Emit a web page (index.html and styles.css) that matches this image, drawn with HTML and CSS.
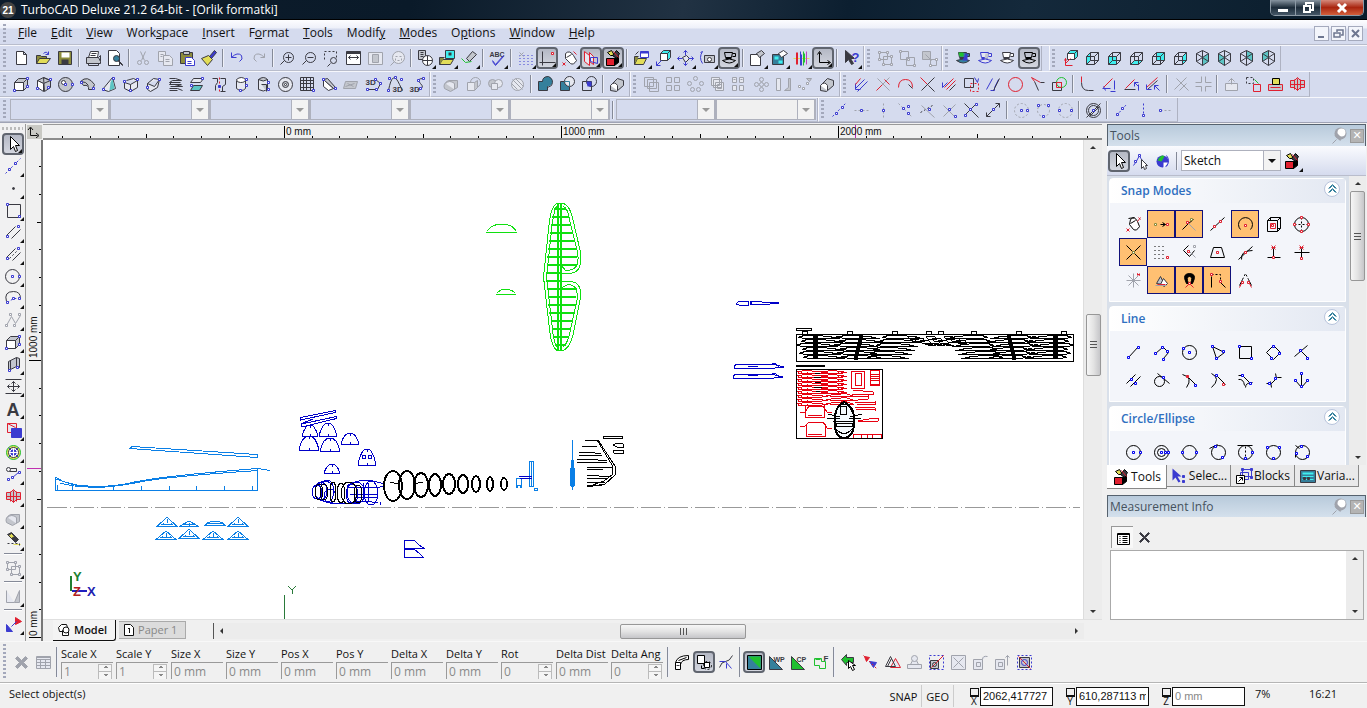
FILE: index.html
```html
<!DOCTYPE html>
<html lang="en">
<head>
<meta charset="utf-8">
<title>TurboCAD Deluxe 21.2 64-bit - [Orlik formatki]</title>
<link rel="stylesheet" href="styles.css">
</head>
<body>
<header class="titlebar">
  <svg class="logo" width="16" height="16" viewBox="0 0 16 16"><circle cx="8" cy="8" r="8" fill="#444"/><text x="8" y="12" text-anchor="middle" class="logo-text">21</text></svg>
  <h1>TurboCAD Deluxe 21.2 64-bit - [Orlik formatki]</h1>
  <div class="winbtns">
    <button aria-label="Minimize"><svg width="14" height="12"><path d="M2 7h10v3h-10z" fill="#fff"/></svg></button>
    <button aria-label="Restore"><svg width="14" height="12"><path d="M5 3v-2h7v7h-2M3 4h6v6h-6z" fill="none" stroke="#fff" stroke-width="2"/></svg></button>
    <button class="close" aria-label="Close"><svg width="14" height="12"><path d="M3 2l8 8M11 2l-8 8" stroke="#fff" stroke-width="3"/></svg></button>
  </div>
</header>
<nav class="menubar">
  <span class="grip"></span>
  <button><u>F</u>ile</button><button><u>E</u>dit</button><button><u>V</u>iew</button><button>Work<u>s</u>pace</button><button><u>I</u>nsert</button><button>F<u>o</u>rmat</button><button><u>T</u>ools</button><button>Modif<u>y</u></button><button><u>M</u>odes</button><button>O<u>p</u>tions</button><button><u>W</u>indow</button><button><u>H</u>elp</button>
  <div class="mdi">
    <button aria-label="Minimize drawing"><svg width="13" height="13"><path d="M3 9h6v2h-6z" fill="#6d7690"/></svg></button>
    <button aria-label="Restore drawing"><svg width="13" height="13"><path d="M5 5v-2h6v5h-2M2 6h6v4h-6z" fill="none" stroke="#6d7690" stroke-width="1.5"/></svg></button>
    <button aria-label="Close drawing"><svg width="13" height="13"><path d="M3 3l7 7M10 3l-7 7" stroke="#6d7690" stroke-width="2"/></svg></button>
  </div>
</nav>
<div class="toolrow">
  <div class="band" data-tools="new open save | print preview | cut copy paste brush | undo redo | zoomin zoomout zoomwin extents page zoomprev | format, image, clean, | spell, | grid, ortho*, snapmouse, plane*, palette*, | folder, view3d, pan, camera, cup*, | sheet, blocks, colors, axes*, | help,"></div>
  <div class="band" data-tools="group ungroup explode"></div>
  <div class="band wide-end" data-tools="cupcolor cupblue cupwhite cup*"></div>
  <div class="band" data-tools="viewaxes left front bottom back right iso1 iso2 iso3 iso4"></div>
</div>
<div class="toolrow">
  <div class="band" data-tools="box boxrot sphere torus cone prism revolve coil extrude glass cyl cyl2 ring mesh facet faded poly3d spline3d curve3d"></div>
  <div class="band" data-tools="solid soliddim soliddim2 slice | union subtract intersect | roundbox"></div>
  <div class="band" data-tools="stack array4 radial stack2 array5 flower mirror scalefit roundbox"></div>
  <div class="band" data-tools="trim break arcedit meet offset copyedit parallel circlered angle overlap | fillet dimedit chamfer stretch | trimg cornerg | push movebox stamp seal"></div>
</div>
<div class="toolrow props">
  <div class="band combos">
    <label class="combo"><select disabled aria-label="Layer"></select></label>
    <label class="combo"><select disabled aria-label="Color"></select></label>
    <label class="combo"><select disabled aria-label="Pen style"></select></label>
    <label class="combo"><select disabled aria-label="Pen width"></select></label>
    <label class="combo"><select disabled aria-label="Pen pattern"></select></label>
    <label class="combo flat"><select disabled aria-label="Scale"></select></label>
    <span class="sep"></span>
    <label class="combo"><select disabled aria-label="Brush style"></select></label>
    <label class="combo flat"><select disabled aria-label="Brush pattern"></select></label>
  </div>
  <div class="band" data-tools="c1 c2 c3 c4 c5 c6 c7 c8 | c9 c10 c11 | c12 | c13 c14 c15"></div>
</div>
<main class="work">
  <aside class="leftbar">
    <span class="hgrip"></span>
    <div class="vtools" data-tools="cursor*, line, point, rect, dline, mline, circle, arc, bezier, box, slab, dimension, letter, fillcolor, target, link, seal, solid, spray, | group, | mirrorv, | transform,"></div>
  </aside>
  <section class="document">
    <div class="origin"><svg width="13" height="13"><path d="M3.500 3v7.500h7M1 5l2.500-3 2.500 3M9 8l3 2.500-3 2.500" fill="none" stroke="#111"/></svg></div>
    <svg class="hruler"><g transform="translate(-43 -125)"><g id="hticks" class="k"></g><path d="M855.500 125v14" stroke="#c030b0"/><text x="286" y="135">0 mm</text><text x="563" y="135">1000 mm</text><text x="840" y="135">2000 mm</text></g></svg>
    <svg class="vruler"><g transform="translate(-27 -140)"><g id="vticks" class="k"></g><path d="M27 468.500h15" stroke="#c030b0" stroke-width="1"/><text transform="translate(37 358) rotate(-90)">1000 mm</text><text transform="translate(37 636) rotate(-90)">0 mm</text></g></svg>
    <svg class="canvas" role="img" aria-label="Orlik formatki drawing">
      <g transform="translate(-43 -140)">
        <path class="axis" d="M47 507.500H1080"/>
        <g class="sky">
          <path d="M132 446.500L257 454.500V457.500L130 448.500z"/>
          <path d="M55.500 477.500V490.500H257.500V469M57.500 485v5M72.500 485v5M113.500 487v3M141.500 486v4M169.500 486v4M196.500 486v4M224.500 486v4M252.500 486v4"/>
          <path d="M55 477Q70 487 95 487.500Q118 487 145 481Q175 476 258 470.500M56 479Q70 484 80 485.500Q108 488 130 483Q160 476 258 468.500L270 470.500M60 483Q80 489 110 486"/>
          <g id="triangles"></g>
          <path d="M516 478h5v9h-1v-2h-3v2h-1zM529.500 461.500h4v25h-4zM531 461v26M534 488h3v2h-3zM571.500 460h2v26h-2zM572.500 440v50M570.500 468h4v17h-4z"/>
        </g>
        <g class="blue">
          <path d="M300.500 417.500L335.500 410.500V412.500L300.500 420zM301.500 424L336.500 416.500V418.500L302 427zM303 423l10-4M519 476.500h13M520 478h12"/>
          <g id="domes"></g>
          <path d="M404.500 540.500h10l4 4 5 3.500h-19zM404.500 549.500h10l5 4 4 4h-19z"/>
          <path d="M347 485.500q15-8 28-4l8 2v3l-6 1M348 487h30M350 494h28M354 497h24M363 483v16M368 483v18M380 502v3M318 484q6-6 14 0M320 500q14 6 30 3t28 0"/>
          <path d="M736 304l3-3h9v4h-9zM750.500 301v4M751 301l11 1h9l8 1-9 1H751zM734 367l2-3h29l11 1 8 2-9 1H734zM748 366h10M770 365l5-2 4 4M733 377l2-3h29l11 1 8 2-9 1H733zM748 375h10M770 375l5-2 4 4"/>
          <g id="noseblue"></g>
        </g>
        <g class="lime" id="wing"><path d="M486 232.500h31M487 231q5-7 15-7t14 7M496 294.500h20M497 293q4-4 9-4t9 4"/></g>
        <g class="k">
          <g id="hoops"></g>
          <path d="M585 440h13l17 26v9l-10 9-18 3M597 440l15 25v10l-8 6-17 6M582 446.500h15M579 453l10-1 12 2M579 455h23M577 460l12-1 18 2M577 462h30M587 467l10 1 15-1M587 470l16-1M587 475l24 2M587 478l20 1M587 482l18 1M587 485l15 0M603.500 436.500h19v2h-19zM613 445q3-2 10-1v3h-6zM613 450h10v3h-9z"/>
          <path d="M796.500 328.500h15v2h-15zM796.500 365.500h28v1h-28z"/><path d="M796.500 334.500h277v27h-277z"/>
          <g id="panel"></g>
        </g>
        <g class="red" id="sheet"><path d="M851.500 371.500h13v17h-13zM855.500 373.500h6v12h-6zM870 370.500h9v15h-9zM870 374h9M870 376h9M870 378h9M870 380h9M870 384h9M800 412h5l4-6h14l4 6h5M805 405v12h19v-12M808 415h14M800 426h5l4-4h14l4 6h5M806 424v12h19v-12M808 434h14M853 390l20 2v2l-21 0M850 397l18-1v3l-20 2M855 403l20-1v2h-18M855 407l20 1v2l-19-1M858 421l16-3h4v3l-20 1M853 434h28v4h-28zM861 434v4M867 434v4M872 434v4"/></g>
        <g class="k"><path class="paper" d="M844 402q-8 4-9 14v9q0 12 9 13 9-1 10-13v-9q-1-10-10-14z"/><path d="M796.500 369.500h86v69h-86zM836 412q1-7 8-8 6 1 8 8M840.500 406.500h6v8h-6zM828 414l12 3M850 417l12-3M827 418h13M849 418h12M833 421h22M836.500 423.500h16v3h-16zM836 429q8 9 16 0"/><path d="M815 373h5M814 377h7M815 382h6M814 387h8M816 391h4"/></g>
        <path d="M71 576v15" stroke="#208030" stroke-width="2"/><path d="M72 591h15" stroke="#2020c0" stroke-width="2"/>
        <g class="ucs"><text x="73" y="581" fill="#208030">Y</text><text x="73" y="596" fill="#b02020">Z</text><text x="87" y="596" fill="#2020b0">X</text></g>
        <path d="M284.500 595v24M288 586l4 4 4-4M292.500 590v4" stroke="#2a7a3a" fill="none"/>
      </g>
    </svg>
    <div class="vscroll"><button aria-label="Scroll up" class="up"></button><span class="track t1"></span><span class="thumb"></span><span class="track t2"></span><button aria-label="Scroll down" class="down"></button></div>
    <div class="sheetbar">
      <div class="tabs">
        <button class="tab on"><svg width="14" height="14"><g fill="#fff" stroke="#111"><path d="M1.500 4.500l3-3h5l1 3-3 4h-5z"/><path d="M5.500 7.500h6v5h-6z"/><circle cx="9" cy="7" r="3"/></g></svg>Model</button>
        <button class="tab"><svg width="12" height="14"><path d="M1.500 1.500h6l3 3v8h-9zM6.500 5v5M5 6l1-1" fill="#fff" stroke="#111"/></svg>Paper 1</button>
      </div>
      <div class="hscroll"><button aria-label="Scroll left" class="lt"></button><span class="track h1"></span><span class="thumb"></span><span class="track h2"></span><button aria-label="Scroll right" class="rt"></button></div>
    </div>
  </section>
  <aside class="dock">
    <div class="panelhead"><h2>Tools</h2><span data-icon="pin"></span><button class="x" aria-label="Close Tools">✕</button></div>
    <div class="docktools">
      <div class="tools" data-tools="cursor* nodeedit globe |"></div>
      <label class="combo live"><select aria-label="Tool palette"><option>Sketch</option></select></label>
      <div class="tools" data-tools="palette,"></div>
    </div>
    <div class="dockbody">
      <div class="sections">
        <section><h3>Snap Modes<button aria-label="Collapse Snap Modes" data-icon="chev"></button></h3><div class="cells" data-tools="d-none d-near* d-vertex* d-mid d-arc* d-box d-quad d-int* d-grid d-perp d-face d-tan d-proj d-ext d-star d-mag* d-magnet* d-ortho* d-opp"></div></section>
        <section><h3>Line<button aria-label="Collapse Line" data-icon="chev"></button></h3><div class="cells" data-tools="l1 l2 l3 l4 l5 l6 l7 l8 l9 l10 l11 l12 l13 l14"></div></section>
        <section><h3>Circle/Ellipse<button aria-label="Collapse Circle/Ellipse" data-icon="chev"></button></h3><div class="cells" data-tools="e1 e2 e3 e4 e5 e6 e7"></div></section>
      </div>
      <div class="vscroll"><button aria-label="Palette up" class="up"></button><span class="thumb long"></span><span class="track t2"></span><button aria-label="Palette down" class="down"></button></div>
    </div>
    <div class="docktabs">
      <button class="on"><i data-icon="palette"></i>Tools</button><button><i data-icon="selinfo"></i>Selec...</button><button><i data-icon="blocksinfo"></i>Blocks</button><button><i data-icon="calc"></i>Varia...</button>
    </div>
    <div class="panelhead second"><h2>Measurement Info</h2><span data-icon="pin"></span><button class="x" aria-label="Close Measurement Info">✕</button></div>
    <div class="meastools"><div class="tools" data-tools="list* xmark"></div></div>
    <div class="measure"><textarea aria-label="Measurement results" readonly></textarea><div class="vscroll"><button aria-label="Results up" class="up"></button><span class="track t2"></span><button aria-label="Results down" class="down"></button></div></div>
  </aside>
</main>
<div class="inspector">
  <div class="band" data-tools="xmarkg tableg |"></div>
  <div class="fields">
    <label>Scale X<span class="spin"><input value="1" disabled></span></label>
    <label>Scale Y<span class="spin"><input value="1" disabled></span></label>
    <label>Size X<span><input value="0 mm" disabled></span></label>
    <label>Size Y<span><input value="0 mm" disabled></span></label>
    <label>Pos X<span><input value="0 mm" disabled></span></label>
    <label>Pos Y<span><input value="0 mm" disabled></span></label>
    <label>Delta X<span><input value="0 mm" disabled></span></label>
    <label>Delta Y<span><input value="0 mm" disabled></span></label>
    <label>Rot<span class="spin"><input value="0" disabled></span></label>
    <label>Delta Dist<span><input value="0 mm" disabled></span></label>
    <label>Delta Ang<span class="spin"><input value="0" disabled></span></label>
  </div>
  <div class="tools" data-tools="| s1 s2* s3 | s4* s5 s6 s7 | s8 s9 s10 s11 s12 s13 s14 s15 s16"></div>
</div>
<footer class="status">
  <p>Select object(s)</p>
  <span class="mode">SNAP</span><span class="mode geo">GEO</span>
  <label class="coord"><i>X</i><input value="2062,417727 mm"></label>
  <label class="coord"><i>Y</i><input value="610,287113 mm"></label>
  <label class="coord"><i>Z</i><input value="0 mm" disabled></label>
  <span class="zoom">7%</span><span class="clock">16:21</span>
</footer>
<script src="app.js"></script>
</body>
</html>
```
FILE: styles.css
```css
* { box-sizing: border-box; }
body { margin: 0; height: 100vh; display: flex; flex-direction: column; overflow: hidden; background: #f0f0f0; color: #111; font: 12px/16px "Open Sans", "Noto Sans", sans-serif; }
button { padding: 0; border: 0; background: none; font: inherit; color: inherit; }
input, select, textarea { font: inherit; border-radius: 0; }
h1, h2, h3, p { margin: 0; font: inherit; }
svg { display: block; flex: none; }
i { font-style: normal; }

.titlebar { flex: none; height: 20px; display: flex; align-items: center; gap: 5px; padding-right: 3px; color: #fff; background: linear-gradient(100deg, #0d1c2c, #0a1a29 30%, #213243 50%, #0c1f30 62%, #14293b 75%, #0a1c2b); border-bottom: 1px solid #000; }
.titlebar h1 { flex: 1; font-size: 12px; white-space: nowrap; }
.logo-text { font: bold 10px "Liberation Sans", sans-serif; fill: #fff; }
.winbtns { align-self: flex-start; display: flex; height: 16px; border: 1px solid #8c99a5; border-top: 0; border-radius: 0 0 5px 5px; overflow: hidden; }
.winbtns button { width: 25px; display: grid; place-items: center; background: linear-gradient(#8794a0, #1d2c3a 50%, #455767); border-right: 1px solid #8c99a5; }
.winbtns .close { width: 42px; border: 0; background: linear-gradient(#d58a7c, #a9250f 50%, #d3603c); }

.menubar { flex: none; height: 25px; display: flex; align-items: center; padding: 2px 3px 0; background: linear-gradient(#fdfdff 0, #eef0f9 8px, #d5dbee 9px); border-bottom: 1px solid #b9bdcc; }
.menubar > button { padding: 0 7px; }
.menubar .grip { margin-right: 5px; }
.mdi { margin-left: auto; display: flex; gap: 2px; padding-right: 1px; }
.mdi button { width: 15px; height: 15px; border: 1px solid #a5aabd; background: #f3f5fb; }

.toolrow { flex: none; height: 26px; display: flex; background: #d5dbee; border-top: 1px solid #f6f7fc; overflow: hidden; }
.band { display: flex; align-items: center; padding: 0 1px 0 3px; border-right: 1px solid #aeb2c2; border-bottom: 1px solid #b9bdcc; flex: none; }
.band + .band { border-left: 1px solid #f6f7fc; padding-left: 2px; }
.wide-end { margin-right: 7px; }
.grip { flex: none; width: 3px; height: 19px; margin-right: 4px; background: repeating-linear-gradient(#a3a8bb 0 2px, transparent 2px 4px); }
.tool { position: relative; flex: none; width: 22px; height: 22px; display: grid; place-items: center; }
.tool svg { overflow: visible; }
.tool.on { border: 2px solid #60656f; border-radius: 4px; background: linear-gradient(#b4b8c4, #d3d6df); }
.tool.on svg { margin: -2px; }
.tool.more::after { content: ""; position: absolute; right: 0; bottom: 0; border: 2px solid #111; border-top-color: transparent; border-left-color: transparent; }
.sep { flex: none; width: 2px; height: 18px; margin: 0 2px; background: #858a98; border-right: 1px solid #eef0f8; }
.tools { display: flex; align-items: center; }

.combo { position: relative; display: block; width: 100px; height: 21px; border: 1px solid #aeb1bd; border-right-width: 2px; flex: none; }
.combo select { display: block; width: 100%; height: 100%; border: 0; padding: 0 2px; appearance: none; background: transparent; color: #111; opacity: 1; }
.combo::before { content: ""; position: absolute; right: 0; top: 0; bottom: 0; width: 16px; background: #f3f3f3; border-left: 1px solid #aeb1bd; pointer-events: none; }
.combo::after { content: ""; position: absolute; right: 4px; top: 8px; border: 4px solid transparent; border-top-color: #999; pointer-events: none; }
.combo.flat { background: #f0f0f0; }
.props { height: 26px; border-bottom: 1px solid #9fa3b5; }

.work { flex: 1; min-height: 0; display: flex; border-top: 1px solid #f0f0f0; }
.leftbar { flex: none; width: 26px; border-right: 1px solid #999; background: #f1f1f2; padding-top: 3px; }
.hgrip { display: block; height: 3px; margin: 0 2px 3px; background: repeating-linear-gradient(90deg, #bbb 0 2px, transparent 2px 4px); }
.vtools { display: flex; flex-direction: column; align-items: center; padding-left: 1px; }
.vtools .sep { width: 18px; height: 2px; margin: 2px 0; border: 0; border-bottom: 1px solid #fff; }
.document { flex: 1; min-width: 0; display: grid; grid-template: 16px minmax(0, 1fr) 22px / 16px minmax(0, 1fr) 18px; margin-left: 1px; background: #f0f0f0; }
.origin { background: #c9c9c4; margin: 1px 1px 1px 0; }
.hruler { width: 100%; height: 16px; grid-column: 2 / 4; border-bottom: 2px solid #8c8c8c; border-top: 1px solid #999; }
.vruler { width: 16px; height: 100%; grid-row: 2 / 4; border-right: 2px solid #777; }
.hruler text, .vruler text { font: 10px "Liberation Sans", sans-serif; fill: #111; }
.canvas { width: 100%; height: 100%; background: #fff; shape-rendering: crispEdges; border-right: 1px solid #ddd; }
.canvas g { fill: none; }
.k { stroke: #000; }
.sky { stroke: #0a7fe6; }
.blue { stroke: #0000c8; }
.lime { stroke: #10e010; }
.red { stroke: #e80010; }
.bold { stroke-width: 2; }
.paper { fill: #f4fbff; stroke-width: 2; }
.solidfill { fill: #000; }
.axis { stroke: #999; stroke-dasharray: 20 3 1 3; }
.canvas .ucs { font: bold 13px "Liberation Sans", sans-serif; }

.vscroll { display: flex; flex-direction: column; align-items: center; background: #ececec; padding: 0 1px; }
.vscroll button, .hscroll button { width: 15px; height: 15px; flex: none; display: grid; place-items: center; }
.vscroll button::after, .hscroll button::after { content: ""; border: 3px solid transparent; }
.up::after { border-bottom-color: #333 !important; margin-top: -3px; }
.down::after { border-top-color: #333 !important; margin-bottom: -3px; }
.lt::after { border-right-color: #333 !important; margin-left: -3px; }
.rt::after { border-left-color: #333 !important; margin-right: -3px; }
.track { flex: 1; }
.t1 { flex: 159; } .t2 { flex: 229; }
.h1 { flex: 392; } .h2 { flex: 323; }
.thumb { flex: none; width: 15px; height: 62px; border: 1px solid #979797; border-radius: 2px; background: linear-gradient(90deg, #f6f6f6, #e3e3e3 50%, #c6c6c9); display: grid; place-items: center; }
.thumb::after { content: ""; width: 7px; height: 7px; background: repeating-linear-gradient(#555 0 1px, transparent 1px 3px); }
.long { height: 90px; }
.hscroll { flex: 1; display: flex; align-items: center; border-left: 1px solid #555; background: #ececec; margin: 3px 0 2px; }
.hscroll .thumb { width: 126px; height: 15px; background: linear-gradient(#f6f6f6, #e3e3e3 50%, #c6c6c9); }
.hscroll .thumb::after { background: repeating-linear-gradient(90deg, #555 0 1px, transparent 1px 3px); }
.sheetbar { grid-column: 2 / 4; display: flex; padding-right: 18px; border-top: 1px solid #e0e0e0; }
.tabs { display: flex; align-items: flex-start; width: 170px; padding-left: 10px; gap: 3px; }
.tab { display: flex; align-items: center; gap: 3px; height: 18px; padding: 0 8px 0 4px; font-size: 11px; background: #dcdcdc; color: #888; border: solid #aaa; border-width: 1px 1px 1px 0; margin-top: 1px; }
.tab.on { height: 21px; margin-top: 0; color: #111; font-weight: 600; background: #f4f4f4; border: solid #111; border-width: 0 1px 1px 0; border-radius: 0 0 3px 0; }

.dock { flex: none; width: 260px; display: flex; flex-direction: column; margin-left: 5px; background: #f0f0f0; padding-right: 1px; }
.panelhead { flex: none; height: 22px; display: flex; align-items: center; padding: 0 1px 0 2px; gap: 2px; color: #45525e; background: linear-gradient(#b8cadb, #d4e0ec); border: 1px solid #56626e; border-bottom: 0; }
.panelhead h2 { flex: 1; font-size: 12px; }
.panelhead .x { width: 14px; height: 14px; background: #b4b4b4; border: 1px solid #999; color: #fff; font: bold 11px/12px "DejaVu Sans", sans-serif; }
.docktools { flex: none; height: 30px; display: flex; align-items: center; padding-left: 1px; background: linear-gradient(#fafbfe, #d5dbee); border-bottom: 1px solid #b9bdcc; }
.docktools .sep { margin: 0 3px 0 2px; }
.combo.live { background: #fff; width: 100px; border-width: 1px; }
.combo.live::after { border-top-color: #111; }
.dockbody { flex: 1; min-height: 0; display: flex; background: #d9e0ea; overflow: hidden; }
.sections { flex: 1; overflow: hidden; display: flex; flex-direction: column; gap: 4px; padding: 2px 3px 0 2px; }
.sections section { flex: none; background: #f3f5fa; border: 1px solid #fff; border-radius: 4px 4px 0 0; padding-bottom: 7px; }
.sections h3 { height: 24px; display: flex; align-items: center; justify-content: space-between; padding: 0 5px 0 11px; font-weight: 600; color: #2f6fc0; background: linear-gradient(90deg, #fff, #e3e8f2); }
.sections h3 button { width: 16px; height: 16px; margin-top: -4px; border: 1px solid #b8c4dc; border-radius: 8px; background: #fff; }
.sections h3 svg { margin: -2px; }
.cells { display: grid; grid-template-columns: repeat(7, 28px); padding: 7px 0 0 9px; }
.cells .tool { width: 28px; height: 28px; }
.cells .tool.on { border: 1px solid #10107a; border-radius: 0; background: #ffc072; }
.docktabs { flex: none; display: flex; height: 27px; align-items: flex-start; margin-bottom: 3px; }
.docktabs button { display: flex; align-items: center; justify-content: center; gap: 1px; height: 22px; width: 64px; border: solid #888; border-width: 0 1px 1px 0; background: #e9e9ea; font-size: 12px; }
.docktabs .on { background: #fff; height: 24px; width: 60px; }
.meastools { flex: none; height: 33px; padding: 9px 0 0 4px; }
.meastools .tool.on { border: solid #999; border-width: 1px 0 0 1px; border-radius: 0; background: #f8f8f8; }
.measure { flex: none; height: 70px; display: flex; margin: 0 2px 21px 3px; border: 1px solid #aaa; background: #fff; }
.measure textarea { flex: 1; min-width: 0; border: 0; resize: none; padding: 2px; }

.inspector { flex: none; height: 42px; display: flex; align-items: center; border-top: 1px solid #f8f8f8; border-bottom: 1px solid #b5b5b5; }
.inspector .band { border: 0; padding-right: 0; }
.inspector .band .grip { height: 36px; }
.inspector .sep { height: 30px; }
.fields { display: flex; gap: 3px; padding-left: 1px; width: 605px; overflow: hidden; }
.fields label { width: 52px; flex: none; font-size: 11px; white-space: nowrap; line-height: 17px; }
.fields span { display: block; height: 17px; border: solid #9a9a9a; border-width: 1px 0 0 1px; }
.fields input { display: block; width: 100%; height: 16px; padding: 0 2px; border: 0; background: #f0f0f0; color: #8a8a8a; font-size: 12px; }
.spin { position: relative; }
.spin::before { content: ""; position: absolute; right: 1px; top: 1px; width: 12px; height: 15px; border: 1px solid #bbb; background: linear-gradient(#f5f5f5 6px, #bbb 6px 7px, #f5f5f5 7px); }
.spin::after { content: ""; position: absolute; right: 4px; top: 3px; width: 6px; height: 10px; background: linear-gradient(#888, #888) 50% 0 / 2px 1px no-repeat, linear-gradient(#888, #888) 50% 1px / 4px 1px no-repeat, linear-gradient(#888, #888) 50% 8px / 4px 1px no-repeat, linear-gradient(#888, #888) 50% 9px / 2px 1px no-repeat; }

.status { flex: none; height: 25px; display: flex; align-items: center; padding: 0 8px 0 9px; border-top: 1px solid #fff; font-size: 11px; }
.status p { flex: 1; padding-bottom: 4px; }
.mode { padding: 4px 4px 0; border-right: 1px solid #ccc; height: 22px; }
.geo { margin-right: 16px; }
.coord { display: flex; align-items: center; gap: 2px; margin-right: 13px; }
.coord i { width: 8px; font-size: 10px; line-height: 9px; padding-top: 1px; text-align: center; }
.coord i::before { content: ""; display: block; width: 7px; height: 6px; border: 1px solid #111; border-bottom-width: 2px; }
.coord input { width: 73px; height: 19px; padding: 0 2px; border: 1px solid #111; background: #fff; font-size: 11px; color: #111; font-family: "Liberation Sans", sans-serif; }
.coord input:disabled { color: #888; }
.zoom { width: 54px; margin-left: -3px; padding-bottom: 4px; }
.clock { width: 50px; padding-bottom: 4px; }
```
FILE: app.js
```javascript
// Colours used by the icon notation: first letter is the stroke, second the fill.
const INK = { k: '#3a3a42', K: '#000', b: '#3b3bd0', B: '#0000f0', r: '#e02030', g: '#a0a3ac', G: '#c3c6cd', w: '#fff', W: '#e6e8f0', y: '#e2dd58', o: '#8c8c3c', t: '#35809c', u: '#5cc4c4', c: '#40eeee', n: '#20c030', N: '#0a7a5a', m: '#c040c0', '.': 'none' };
const WIRE = 'k. M3 7h8v8h-8zM3 7l4-4h8l-4 4M15 3v8l-4 4M7 3v8h8M3 15l4-4';
const ISO = 'k. M9 1l6 3v8l-6 4-6-4v-8zM3 4l6 4 6-4M9 8v8M3 12l6-4 6 4M9 1v7';
const CUP = '{k}{w} M4 3h8l-1 5h-6zM12 4h3v3h-3M2 11q7 5 13 0q-6-3-13 0M5 9h6';
const cup = (s, f) => CUP.replace('{k}', s).replace('{w}', f);
const BOX = 'kG M2 7l4-4h9l-4 4zM11 15l4-4v-8l-4 4z;kw M2 7h9v8h-9z;bw S 2 15 15 3 15 11';

// Each icon is a list of parts: "<stroke><fill>[-] path | O cx cy r | S x y ... | T x y size text".
const ICONS = {
  new: 'kw M4 2h7l3 3v10h-10zM11 2v3h3', open: 'ko M2 14v-8h4l1 1h5v3;ky M2 14l3-5h11l-4 5z;b. M9 4q3-3 5 1M14 2v3h-3',
  save: 'ko M2 2h13v13h-13z;.w M5 3h8v5h-8z;.k M5 10h7v5h-7z', print: 'kw M4 8l2-6h8l-1 6z;kG M2 8h12l2 4v2h-14z;k. M7 4h5M6 6h5M4 14v2h10v-2M14 8l2-2v6',
  preview: 'kw M2 1h8l3 3v12h-11z;kt O 10 9 3;kk M12 11l4 4v1l-4-4', cut: 'g. M6 2l4 9M11 2l-4 9;g. O 5 13 2;g. O 12 13 2',
  copy: 'gW M2 2h7v10h-7z;gW M7 6h6l3 3v7h-9zM9 10h4M9 12h4M4 5h3M4 7h2', paste: 'ko M2 3h12v11h-12z;kG M5 2h6v3h-6z;bw M7 8h6l3 3v5h-9zM9 12h4M9 14h4',
  brush: 'ky M1 9l7-3l4 4l-5 6z;kb M9 7l5-6l2 2l-5 6z', undo: 'b. M3 3v5h5M3 8q6-6 10-2q2 4-2 6', redo: 'g. M14 4v4h-4M14 8q-6-6-10-2q-2 4 2 6',
  zoomin: 'k. O 10 8 5;k. M10 5v6M7 8h6M6 11l-4 4', zoomout: 'k. O 10 8 5;k. M7 8h6M6 11l-4 4', zoomwin: 'k.- M2 10v-8h12v7;k. O 11 11 3;k. M8 14l-3 3',
  extents: 'kw M2 3h14v12h-14zM4 8h10M6 6l-2 2 2 2M12 6l2 2-2 2;kk M2 2h14v2h-14z', page: 'gW M2 3h14v12h-14z;gG M6 5h6v8h-6z', zoomprev: 'gW O 10 8 6;g. M6 12l-4 4;g.- M7 7h6v4h-6z',
  format: 'kG M2 1h7v9h-7zM4 3h3M4 5h3M4 7h3;kw O 11 11 5;k. M6 11h10M11 6v10', image: 'ky M1 15l3-5h11l-3 5z;kc M7 1h9v8h-9z;ko M1 15v-7h5;.k M10 3h3v3h-3z', clean: 'kG M6 9l6-7 4 3-7 7z;n. M1 9l4 4 6-1',
  spell: 'kk T 1 7 7 ABC;b. M4 11l3 4 8-9;b. M4 12l3 4 8-9', grid: 'b.d M3 6h13M3 9h13M3 12h13M3 15h13;g. M3 3l4 4M7 3l-4 4', ortho: 'k. M4 2v14M1 13h16;rw S 14 4',
  snapmouse: 'kw M5 4q4-4 8 2l3 5q-3 5-6 3l-5-5zM6 8l5-3;r. M2 13l3 3M5 13l-3 3M13 2l3 3', plane: 'rW M2 2l5 4v10l-5-4z;rW M7 3l4 4v8l-4-3z;b. M8 8h7v6l-7-2z',
  palette: 'Kr M2 9h8v7h-8z;KK M10 9l4-2v6l-4 3z;Ky M3 3l4-2 3 5h-4z;Kk M8 6l4-5 3 3-3 5z;r. M9 2l5 6', folder: 'ky M2 15l3-6h9l-3 6z;ko M2 15v-8h4;bw M8 2h8v6h-8z;.b M8 2h8v2h-8z;k. M3 5l3-3',
  view3d: 'kc M6 4l3-3h7l-3 3zM13 11l3-3v-7l-3 3z;kw M6 4h7v7h-7z;b. M2 16l5-5M2 12v4h4', pan: 'kW M6 8l4-2 3 3-4 4z;b. M9 1v5M9 12v4M1 9h5M12 9h5M7 3l2-2 2 2M7 14l2 2 2-2M3 7l-2 2 2 2M15 7l2 2-2 2',
  camera: 'kG M6 6h10v7h-10z;kw O 11 10 2;b. M4 2q-4 6 0 12M4 2l-2 1', cup: cup('K', '.'), cupcolor: cup('k', 't') + ';.n M4 3h5v4h-4z;.b M11 4h2v7h-5z', cupblue: cup('b', 'W') + ';.G M9 4h3l-1 5h-3z', cupwhite: cup('k', 'w'),
  sheet: 'kw M2 5h10v11h-10z;kG M8 4l5-3 3 3-5 4z', blocks: 'kt M2 5h11v10h-11z;.c M4 7h4v3h-4zM8 11h4v3h-4z;kw M8 4l5-3 4 3-6 4z', colors: 'y. M1 9h16;r. M4 3v12M5 3v12;b. M8 2v14M9 5v11;n. M11 2v14M12 4v9;m. M14 2v13',
  axes: 'K. M5 3v10h10M3 5l2-3 2 3M13 11l3 2-3 2', help: 'kk M3 1v12l3-3 3 5 2-1-3-5h4z;bb T 9 12 13 ?', group: 'g. M3 3h8v7h-8zM7 7h8v8h-8z;gW S 3 3 11 3 3 10 15 7 7 15 15 15', ungroup: 'g. M2 2h8v8h-8zM8 8h8v8h-8z;gW S 2 2 10 10 16 16', explode: 'gG M2 2h8v8h-8z;g. M5 5l6 6M10 10h6v6h-6z;gw S 16 10 10 16',
  viewaxes: 'kc M6 4l3-3h7l-3 3zM13 10l3-3v-6l-3 3z;kw M6 4h7v6h-7z;r. M4 9v7h7M4 14l5-5M3 11l1-2 1 2', left: '.c M3 7l4-4v8l-4 4z;' + WIRE, front: '.c M3 7h8v8h-8z;' + WIRE, bottom: '.c M3 15l4-4h8l-4 4z;' + WIRE, back: '.c M7 3h8v8h-8z;' + WIRE, right: '.c M11 7l4-4v8l-4 4z;' + WIRE,
  iso1: '.u M9 8l6-4v8l-6 4z;' + ISO, iso2: '.u M3 4l6 4v8l-6-4z;' + ISO, iso3: '.u M9 1l6 3v8l-6-4z;' + ISO, iso4: '.u M3 4l6-3v7l-6 4z;' + ISO,
  box: BOX, boxrot: 'kG M9 2l7 3v7l-6 4zM3 5l6-3 7 3-7 3z;kw M3 5l6 3v8l-6-4z;bw S 3 13 16 4 14 12', sphere: 'kG O 9 9 7;kw O 7 7 2;bw S 9 9 16 9', torus: 'kG M2 6q7-7 14 3l-2 5-4 0q1-5-5-4zM2 6q6 0 8 4;bw S 3 7 15 13',
  cone: 'kW M2 14l10-12 3 11-7 3z;.u M10 7l2-4 2 10-5 2z;bw S 13 3 3 14', prism: 'kW M2 7l6 2v7l-6-3zM8 9l7-4v7l-7 4M4 5l7-2 4 2;bw S 2 6 15 4 8 15', revolve: 'kW M3 8l6-5 6 1-2 8-7 4-3-2zM3 8l7 3 5-7;bw S 3 12 15 4', coil: 'k. M3 3h6l6 2h-9l-3 2h11M5 7l-2 2h12M8 9l8 2h-12M3 13h8l5 2M3 15h8', extrude: 'kW M5 3h10l-3 4h-10z;ku M5 10h9l-3 5h-9z;bw S 3 10 14 3', glass: 'k. M2 3h5v4l-2 3v5M10 3h5v6l-3 2v5M10 16h5;r.- M9 2v14;bb S 9 11',
  cyl: 'kW M4 5v8q5 4 9 0v-8;kw M4 4q5-4 9 0 0 3-5 3-4 0-4-3;bw S 14 4 14 10 8 15', cyl2: 'kW M4 4v10q5 3 9 0v-10z;kG M4 4q5-4 9 0-4 3-9 0M7 9h5v7;bw S 14 7 14 14', ring: 'kW O 9 9 7;kG O 9 9 3;kw O 9 9 1', mesh: 'k. M2 2h13v13h-13zM5 2v13M8 2v13M12 2v13M2 5h13M2 8h13M2 12h13;bw S 15 15', facet: 'kw M3 4l10 9-5 2-5-4z;kG M3 4l4-1 8 9-2 1z;bw S 3 4 15 13', faded: 'gG M3 6h12l-2 7h-12z;g. M5 8l6 3M3 11l9-3',
  poly3d: 'kk T 1 9 8 3D;k. M11 4l5 4-3 6h-9;bw S 11 4 16 8 12 14 3 14', spline3d: 'k. M2 15q4-22 11-6l3 6;kk T 6 16 8 3D;bw S 3 3 9 2 15 4 2 15', curve3d: 'kk T 1 16 8 3D;k. M15 3q-8 0-3 5t-3 6;bw S 15 3 10 5 12 13',
  solid: 'gG M2 13q-2-5 4-8l9 0v7l-7 4z;gW M3 8q4-4 9 0v6', soliddim: 'g. O 11 7 5;gW M3 7h7v8h-7z;gG M10 7l3-2v7l-3 3', soliddim2: 'gG O 6 8 4;gW O 12 8 4;gW M5 8h6v6h-6z', slice: 'gW O 9 9 6;gG M4 4l10 10M7 3l8 8M3 8l6 6', union: 'kt M2 6h9v9h-9z;.t O 11 6 5;k. M6 6q0-5 6-5 6 3 3 9l-4 2', subtract: 'kt M2 6h9v9h-9z;kW O 11 6 5;t. M6 6h5v5', intersect: 'k. M2 6h9v9h-9z;k. O 11 6 5;.b M6 6h5v5h-4z', roundbox: 'kG M2 10l7-7 6 2v5l-7 6-6-1z;kw M2 10q4-5 7 0v5',
  stack: 'g. M2 2h9v9h-9zM5 4h9v9h-9zM7 7h9v9h-9z', array4: 'g. M2 2h5v5h-5zM10 2h5v5h-5zM2 10h5v5h-5zM10 10h5v5h-5z', radial: 'g. O 9 3 2;g. O 3 8 2;g. O 15 8 2;g. O 6 14 2;g. O 12 14 2', stack2: 'gW M3 2h8v8h-8zM5 4h8v8h-8zM7 7h8v8h-8z;g. M9 9h4v4h-4z', array5: 'gW M2 2h4v5h-4zM9 2h4v5h-4zM2 10h4v5h-4zM9 10h4v5h-4zM3 4h2M10 4h2', flower: 'g. O 9 9 2;g. O 9 4 2;g. O 4 9 2;g. O 14 9 2;g. O 9 14 2', mirror: 'gW M2 3h4v12h-4z;gG M14 3v9l-4 3h6v-12z', scalefit: 'gG M10 3h5l-2 3z;gw S 3 11 7 13 11 8', mirrorv: 'gW M2 3v12h8;gG M15 3v12h-5z',
  trim: 'b. M3 13l9-9M5 16l10-10M3 8v6h5;r. M8 3l-5 6', break: 'r. M2 15l6-6;g. M8 9l7-7M3 3l12 12;r. M10 4l5 5', arcedit: 'r. M2 12q0-8 7-8t7 8;k. M12 9l4 4', meet: 'r. M2 2l8 8;k. M16 16l-6-6M3 15l13-13', offset: 'b. M2 7v5l5-5;r. M6 14l9-9M4 12l9-9;k. M9 15l6-6', copyedit: 'k. M2 3h9v9h-9z;r.- M8 8h8v8h-8z;b. M12 2l3 5 1-4', parallel: 'b. M2 14l6-11M6 15h4v-3l4-8;k. M9 15l6-12', circlered: 'r. O 9 9 7', angle: 'r. M3 2l9 5M3 2l3 4;k. M6 6l4 9M12 7h4', overlap: 'k. M2 7h9v8h-9z;n. O 11 7 5;r. M6 7h5v5h-5z',
  fillet: 'r. M3 1v6;k. M3 7q0 8 7 8h5', dimedit: 'r. M3 12l9-9;b. M2 13h8M14 5v9M10 16h5M3 11l2 4', chamfer: 'r. M3 13l9-9;k. M2 14h11;b. M12 7l4 4M12 7h4M12 7v4M16 9v6', stretch: 'r. M2 12l11-10;k. M3 14l10-9;b. M15 15l-5-5h4M10 10v4M2 9v5h5', trimg: 'g. M2 14l12-12M4 3l12 12M7 15l7-7', cornerg: 'g. M7 1v6h-6M11 1v6h6M7 16v-5h-6M11 16v-5h6', push: 'gW M3 8h12v7h-12zM9 3v6M6 6l3-3 3 3', movebox: 'k.- M2 2h7v6h-7z;n. M10 4l4 4;r. M9 9h7v7h-7z', stamp: 'rG M2 9h14v6h-14z;Ky M6 3h7v6h-7z;r. M4 12h10', seal: 'rG M9 2l3 3h4v7h-4l-3 3-3-3h-4v-7h4zM9 3v12M2 9h14M6 4v10M12 4v10',
  c1: 'b.- M2 15l13-13;bw S 6 12 12 6', c2: 'g.- M2 9h15;bw S 9 9', c3: 'g.- M9 2v15;bw S 9 9', c4: 'g.- M2 2l14 14;bw S 7 7 12 5 12 12', c5: 'k.- M2 11l12-7;g. M3 4l13 12;bw S 11 8', c6: 'g. M3 15l12-12M3 4l11 11;bw S 9 8 15 15', c7: 'k. M2 2l14 14M2 14l12-12;bw S 8 8 14 3 3 14', c8: 'k. M2 15l13-13M11 2h4v4M2 11v4h4;bw S 9 8', c9: 'g.- O 9 9 7;bw S 9 9 15 9', c10: 'g.- O 9 9 6;bw S 4 4 14 4 9 15', c11: 'g.- O 9 9 7;bw S 3 9 15 9', c12: 'k. O 9 9 7;k. O 9 9 5;k. M2 16l14-14M5 15l10-10;bw S 9 9', c13: 'b.- M4 14l10-11;bw S 5 13 10 7', c14: 'b.- M9 2v13;bw S 9 14', c15: 'g.- M4 9h12;bw S 4 9',
  cursor: 'Kw M6 1v13l3-3 2 5 2-1-2-5h4z', line: 'b.- M1 16l15-15;bw S 5 12 11 6', point: 'kk O 9 9 1', rect: 'k. M3 3h13v13h-13z;bw S 3 3 15 15', dline: 'k. M2 12l9-9M7 15l9-9;bw S 3 13 14 3', mline: 'k. M2 12l9-9M8 15l8-8;k.- M5 13l9-9;bw S 3 13 14 3', circle: 'k. O 8 9 7;bw S 8 9 15 9', arc: 'k. M2 12q-3-10 7-10 7 0 7 7;b.- M3 13l6-4h7;bw S 3 13 9 9 15 9', bezier: 'g. M2 14l5-9 4 7 5-8;gw S 2 14 6 3 10 14 15 3', slab: 'kG M4 6l8-4v9l-8 4zM6 5v9M12 2l3 1v9l-3-1;bw S 13 12 5 15', dimension: 'k. M1 2h16M1 16h16M9 4v10M3 9h12M7 6l2-2 2 2M7 12l2 2 2-2M5 7l-2 2 2 2M13 7l2 2-2 2', letter: 'kk M2 16h3M12 16h5M3 16l6-14 6 14M5 11h8M9 3l5 13h2l-6-14z', fillcolor: 'rW M3 2h9v9h-9z;bb M7 7h10v9h-10z;r. M3 2l8 4', target: 'ny O 9 9 7;kw O 9 9 5;b. M4 4l4 4M14 4l-4 4M4 14l4-4M14 14l-4-4M6 8h2v-2M12 8h-2v-2M6 10h2v2M12 10h-2v2', link: 'k. O 4 4 2;k. M6 3h6v3h-7;b. M8 12l6-5;bw S 4 14 8 12 15 7', spray: 'kk M3 3l4-2 7 7-3 3z;ky M4 4l3-2 3 3-3 2z;y. M9 13h7;k.- M3 12h12v4', transform: 'rr M11 2v7l6-3z;bb M2 9v7h6z;b. M7 11l5-5',
  nodeedit: 'b. M1 13q2-2 6-10q1 3 3 5;bw S 3 9 7 3;kw M9 7v9l2-2 1 3 2-1-1-3h2z', globe: '.b O 8 9 6;.n M3 8q4-7 7-4l-3 5z;.w M9 10h5l-5 6z;b. M12 3q4 5 0 11', pin: '.g O 10 6 6;.w O 11 5 4;g. M2 16l4-4M5 8l5 5;.g M4 8l5 5 3-2-5-5z', chev: 't. M5 8l4-4 4 4M5 12l4-4 4 4M6 8l3-3 3 3M6 12l3-3 3 3',
  selinfo: '.b M2 1v12l3-3 3 5 2-1-3-5h4z;bb S 13 9 13 14', blocksinfo: 'b. M7 2h9v7h-9zM5 5h8v7h-8z;Kw M1 8h8v8h-8zM3 14l4-4M4 10h3v3;bb S 7 2 16 2 16 10', calc: 'kt M2 3h15v12h-15z;.c M4 5h11v2h-11z;c. M4 9h11M4 12h11;kk S 6 11 10 11', list: 'Kw M3 4h12v11h-12zM3 5h12M8 7h5M8 9h5M8 11h5M8 13h5M5 7h1M5 9h1M5 11h1M5 13h1', xmark: 'kk M4 5l1-1 4 4 4-4 1 1-4 4 4 4-1 1-4-4-4 4-1-1 4-4z', xmarkg: 'gg M3 5l2-2 4 4 4-4 2 2-4 4 4 4-2 2-4-4-4 4-2-2 4-4z', tableg: 'gW M2 3h14v12h-14zM2 6h14M6 6v9M11 6v9M2 9h14M2 12h14M2 4h14',
  'd-none': 'Kw M6 4q4-4 7 2l2 5q-3 5-6 3l-4-5zM6 8l5-3M4 3l6-1;r. M2 13l3 3M5 13l-3 3M14 2l2 2M16 2l-3 4', 'd-near': 'K. M8 9h5M10 7l3 2-3 2M11 8v2;ow S 3 9;rw S 15 9', 'd-vertex': 'K. M2 14l6-6 5-4;g. M7 7l8 8;ow S 11 4;rw S 7 7', 'd-mid': 'K. M2 15l14-13;rw S 6 11 12 6', 'd-arc': 'K. M4 14A7 7 0 1 1 14 14;rw S 9 10', 'd-box': 'K. M3 5h10v11h-10zM6 2h10v11h-3M3 5l3-3M13 5l3-3M6 2v3M13 16l3-3;rw S 8 10;r. M6 8h5v5h-5z', 'd-quad': 'K. O 9 9 7;K.- M9 2v14M2 9h14;rw S 9 2 9 16 2 9 16 9', 'd-int': 'K. M2 2l14 14M16 2l-14 14;ow S 9 9', 'd-grid': 'K.d M2 3h12M2 7h12M2 11h12M2 15h9;rw S 15 14', 'd-perp': 'K. M3 7l5-5M3 7l6 6 5-6;g. M9 8l6 6;gw S 14 3;rw S 8 8', 'd-face': 'K. M5 4h8l3 10h-14z;rw S 9 9', 'd-tan': 'K. M2 16l14-13M5 16q-1-9 11-9;rw S 9 9', 'd-proj': 'K. M9 5v9M3 14h13;r. M7 2l4 4M11 2l-4 4M7 4h4;rw S 9 14', 'd-ext': 'K. M9 5v9M2 9h15;r. M7 2l4 4M11 2l-4 4M7 4h4;rw S 9 15', 'd-star': 'g. M9 2v14M2 9h14M4 4l10 10M14 4l-10 10;r. M13 4v-2l2 2v-2', 'd-mag': 'kG M4 12l4-7 4 8z;kw M8 13l3-6 4 5-3 3z;r. M5 13h8;g. M3 14h11', 'd-magnet': 'KK M6 12q-5-10 3-10 8 0 3 10h-2q3-7-1-7-4 0-1 7z;r. M9 12l-4 4M9 12l4 4;rw S 9 12', 'd-ortho': 'K. M3 5v11M12 11l5 5;K.- M3 3h9v8;rw S 3 3 12 10', 'd-opp': 'K. M3 14l3-6M15 14l-3-6;K.- M6 8l3-6 3 6;rw S 6 11 12 11;r. M3 16l2-4M15 16l-2-4',
  l1: 'K. M4 14l10-11;Bw S 4 14 14 4', l2: 'K. M3 10l7-6M11 15l5-6;K. M10 3l5 5;Bw S 3 10 10 4 15 8 11 16', l3: 'K. O 9 9 7;Bw S 3 5 9 9', l4: 'K. M4 3l12 6-8 6z;Bw S 4 3 15 8 8 15', l5: 'K. M3 3h12v12h-12z;Bw S 3 3 15 15', l6: 'K. M9 2l7 7-7 7-7-7z;Bw S 9 3 7 15 15 10', l7: 'K. M2 13l13-11M8 7l8 8;Bw S 8 7 15 15', l8: 'K. M2 12l9-9M6 15l10-10;Bw S 7 8 11 12', l9: 'K. O 7 10 5;K. M5 2l12 10;Bw S 11 6', l10: 'K. M2 3q11 3 4 13M8 6l8 8;rr S 7 5;Bw S 15 14', l11: 'K. M3 2q10 5 0 14M8 4l9 9;Bw S 8 4;rw S 15 13', l12: 'K. M5 3l9 9M2 8q5-1 6 6M9 16q0-5 7-5M2 4h5;Bw S 6 4 14 12', l13: 'K. M2 12h5l6-6h4M11 2l1 5M6 10l1 6;Bw S 5 12 11 7', l14: 'K. M9 3v12M3 9l6 7 6-7;Bw S 9 2 3 9 15 9 9 15',
  e1: 'K. O 9 9 7;Bw S 9 9 16 9', e2: 'K. O 9 9 7;K. O 9 9 4;Bw S 9 9 13 9 16 9', e3: 'K. O 9 9 7;Bw S 2 9 16 9', e4: 'K. O 10 9 7;K. M1 5l8-4;Bw S 7 3 14 14', e5: 'K. O 9 9 7;K. M1 2h15;K.- M9 3v12;Bw S 9 15 16 9', e6: 'K. O 9 9 7;Bw S 3 4 15 4 9 15', e7: 'K. O 10 9 7;K. M3 2l4 3M3 9v5M13 15l3-3;Bw S 9 3 4 10 15 13',
  s1: 'Kw M2 9h5v7h-5zM2 9q2-7 13-7v4q-7 0-8 5M5 7l8-3;k. M3 12h3', s2: 'Kw M2 2h7v8h-7zM9 9h5v5h-5z;K.- O 12 12 4;K. M6 12v3h3', s3: 'k. M2 14q2-6 6-6t7-6;b. M2 8h6l6 7M9 10v5', s4: 'Kt M2 2h14v14h-14z;.n M3 3h12v12z', s5: 'kt M2 3l13 13h-13z;kk T 6 8 7 WP', s6: 'kn M2 3l13 13h-13z;kk T 7 8 7 CP', s7: 'n. M3 5h7v3h4v7h-6v-3h-5zM4 6h5;kk T 12 7 8 F', s8: 'kn M2 6l5-5v3h7v5h-7v3z;Kw M9 7v8l2-2 2 4 2-1-2-4h3z', s9: 'rr M3 3l5 1-3 4z;bb M8 8l7 1-3 5z;r.- M2 2l14 14', s10: 'rW M7 14l5-9 5 9z;k. M2 13l5-10 5 10zM4 13l4-8', s11: 'gW M2 11h14v4h-14zM5 11l2-4h4l2 4;gW O 9 5 3', s12: 'b.- M2 2h14v14h-14z;kG M3 7h8v8h-8z;r. M4 14l12-12;k. O 7 11 2', s13: 'gW M2 2h14v14h-14zM4 4l10 10M14 4l-10 10', s14: 'gW M2 6h9v10h-9zM5 9h4v4h-4zM11 6q0-4 5-3', s15: 'gW M2 6h9v10h-9zM5 9h4v4h-4zM14 2v10M12 4l2-2 2 2', s16: 'b.- M2 2h14v14h-14z;kG M4 4h10v10h-10z;r. M3 3l12 12;b. O 9 9 3'
};

function part(spec) {
  const space = spec.indexOf(' ');
  const head = spec.slice(0, space);
  const body = spec.slice(space + 1);
  const dash = head[2] === '-' ? ' stroke-dasharray="2 2"' : head[2] === 'd' ? ' stroke-dasharray="1 3"' : '';
  const paint = `stroke="${INK[head[0]]}" fill="${INK[head[1]]}"${dash}`;
  const a = body.split(' ');
  if (a[0] === 'O') return `<circle cx="${a[1]}" cy="${a[2]}" r="${a[3]}" ${paint}/>`;
  if (a[0] === 'T') return `<text x="${a[1]}" y="${a[2]}" font-size="${a[3]}" font-weight="bold" fill="${INK[head[1]]}">${a[4]}</text>`;
  if (a[0] === 'S') {
    let d = '';
    for (let i = 1; i < a.length; i += 2) d += `M${a[i] - 1} ${a[i + 1] - 1}h2v2h-2z`;
    return `<path d="${d}" ${paint}/>`;
  }
  return `<path d="${body}" ${paint}/>`;
}

// The text tool's sign is a letter, so it is set as type.
ICONS.letter = 'kk T 2 16 18 A';

function icon(name) {
  return `<svg width="18" height="18" viewBox="-0.5 -0.5 18 18" font-family="Liberation Sans, sans-serif" aria-hidden="true">${ICONS[name].split(';').map(s => part(s.trim())).join('')}</svg>`;
}

document.querySelectorAll('[data-tools]').forEach(box => {
  const html = box.dataset.tools.trim().split(' ').map(word => {
    if (word === '|') return '<span class="sep"></span>';
    const name = word.replace(/[*,]/g, '');
    const cls = 'tool' + (word.includes('*') ? ' on' : '') + (word.includes(',') ? ' more' : '');
    return `<button class="${cls}" aria-label="${name}">${icon(name)}</button>`;
  }).join('');
  box.innerHTML = (box.classList.contains('band') ? '<span class="grip"></span>' : '') + html;
});
document.querySelectorAll('.combos').forEach(b => b.insertAdjacentHTML('afterbegin', '<span class="grip"></span>'));
document.querySelectorAll('[data-icon]').forEach(el => { el.innerHTML = icon(el.dataset.icon); });

const put = (id, html) => document.getElementById(id).insertAdjacentHTML('beforeend', html);
const path = (d, cls = '') => `<path d="${d}" class="${cls}"/>`;

// Rulers: a tick for every 100 mm, longer at 500 mm and 1000 mm.
let ticks = '';
for (let i = -8; i < 30; i++) {
  const x = Math.round(284 + i * 27.7) + 0.5;
  ticks += `M${x} ${i % 10 === 0 ? 126 : i % 5 === 0 ? 134 : 136}V139`;
}
put('hticks', path(ticks));
ticks = '';
for (let i = 0; i < 18; i++) {
  const y = Math.round(637 - i * 27.7) + 0.5;
  ticks += `M${i % 10 === 0 ? 29 : i % 5 === 0 ? 37 : 39} ${y}H42`;
}
put('vticks', path(ticks));

// Wing ribs between the outline and the spar.
const outline = [[203, 557, 563], [209, 552, 569], [217, 550, 572], [230, 548, 575], [248, 546, 579], [262, 545, 580], [277, 543, 580], [292, 545, 580], [310, 547, 578], [330, 550, 574], [345, 553, 569], [350, 557, 563]];
const edge = (y, side) => {
  const i = Math.max(1, outline.findIndex(p => p[0] >= y));
  const [a, b] = [outline[i - 1], outline[i]];
  return a[side] + (b[side] - a[side]) * (y - a[0]) / (b[0] - a[0]);
};
let ribs = '';
for (let y = 209; y < 348; y += 8) {
  const open = y > 271 && y < 284;
  ribs += `M${edge(y, 1) + 2} ${y}H${open ? 560 : edge(y, 2) - 3}`;
}
put('wing', path(ribs, 'bold') + path('M558 204v146M561 204v146', 'bold') +
  path('M563 203.500h-6Q551 206 549 225L543.500 277L549 325Q551 347 557 350.500H563Q570 348 573 335L580 300Q583 283 571 281.500H561M563 203.500Q570 205 573 220L580 250Q584 272 570 273.500H561M557 206q-3 3-5 20L546.500 277L552 325Q554 345 557 347M563 206Q568 208 570 222L577 250Q581 268 570 270H565l-3-4M563 347Q567 345 570 332L577 300Q579 285 568 284.500l-6 3'));

// Small blue formers.
let tri = '';
[[167, 527, 10], [189, 527, 6], [238, 527, 10], [166, 540, 9], [189, 539, 10], [213, 540, 9], [238, 540, 9]].forEach(([x, y, h]) => {
  tri += `M${x - 10} ${y - 0.5}L${x} ${y - h}L${x + 10} ${y - 0.5}zM${x - 6} ${y - 2.5}h12M${x + 0.5} ${y - h + 2}v4M${x - 4} ${y - 4}v2M${x + 4} ${y - 4}v2`;
});
tri += 'M205 525.500l3-3 4-1h6l4 1 3 3zM208 523.500h14';
put('triangles', path(tri));

let domes = '';
[[310, 436, 8, 11], [328, 436, 9, 13], [350, 444, 9, 11], [309, 450, 10, 14], [330, 451, 10, 13], [367, 465, 9, 16], [332, 473, 8, 9]].forEach(([x, y, w, h]) => {
  domes += `M${x - w} ${y + 0.5}h${2 * w}M${x - w} ${y}Q${x - w + 3} ${y - h} ${x} ${y - h}T${x + w} ${y}M${x} ${y - h + 1}v2M${x} ${y - 2}v2`;
});
put('domes', path(domes) + '<circle cx="364" cy="457" r="2"/><circle cx="370" cy="457" r="2"/>');

const oval = (x, y, rx, ry, cls = '') => `<ellipse cx="${x}" cy="${y}" rx="${rx}" ry="${ry}" class="${cls}"/>`;
put('noseblue', [[317, 492, 5, 7], [321, 491, 6, 9], [327, 491, 7, 11], [352, 494, 6, 10], [356, 493, 9, 11], [371, 493, 7, 12], [330, 496, 6, 7]].map(o => oval(...o)).join(''));
put('hoops', [[319, 492, 4, 8], [324, 492, 4, 8], [333, 492, 3, 10], [341, 493, 4, 10], [349, 493, 8, 11], [358, 494, 4, 9]].map(o => oval(...o)).join('') +
  [[393, 486, 9, 15], [407, 485, 8, 14], [421, 485, 7, 12], [435, 485, 6, 11], [449, 484, 6, 10], [463, 484, 5, 9], [476, 484, 4, 8], [490, 484, 3, 7], [504, 484, 3, 6]].map(o => oval(...o, 'bold')).join('') + path('M390 482l8 2M413 484l10-2'));

// Wing rib sheets: tapered profiles nested in rows.
let nest = '';
[802, 847, 892, 926, 938, 971, 1016, 1061].forEach(x => { nest += `M${x}.500 331.500h5v3h-5z`; });
let joints = '';
for (let row = 0; row < 6; row++) {
  const y = 336.5 + row * 4;
  const shift = [0, 3, -2, 4, 1, 5][row];
  for (let col = 0; col < 3; col++) {
    const w = 38;
    const x = 798 + col * 40 + (col === 2 ? -row * 3 + 4 : shift);
    nest += `M${x} ${y + 1}l6-2h14l${w - 20} 2l-10 1h-${w - 18}zM${x + 12} ${y + 2}h${w - 8}`;
    const m = 1870 - x;
    nest += `M${m} ${y + 1}l-6-2h-14l-${w - 20} 2l10 1h${w - 18}zM${m - 12} ${y + 2}h-${w - 8}`;
  }
  joints += `M813 ${y}h4v2h-4zM${859 - row} ${y - 1}h3v4h-3zM${1007 + row} ${y - 1}h3v4h-3zM1053 ${y}h4v2h-4zM${836 + shift} ${y}h3v1h-3zM${1032 - shift} ${y}h3v1h-3z`;
}
for (let i = 0; i < 9; i++) nest += `M${908 + i * 6} ${337 + (i % 3) * 2}l8-1 3 3-8 1zM${922 + i * 3} ${343 + i % 3}h8`;
put('panel', path(nest) + path(joints, 'solidfill'));

let red = '';
for (let row = 0; row < 9; row++) {
  const y = 371.5 + row * 4;
  red += `M798 ${y}l8-1 12 1 10 1-12 1h-17zM801 ${y - 1}v3M807 ${y}v2`;
  if (row < 6) red += `M823 ${y}l10-1 14 2-12 1h-14zM838 ${y}h4v2h-4z`;
  else red += `M826 ${y}l20-2 8 3h-20z`;
}
put('sheet', path(red));
```
